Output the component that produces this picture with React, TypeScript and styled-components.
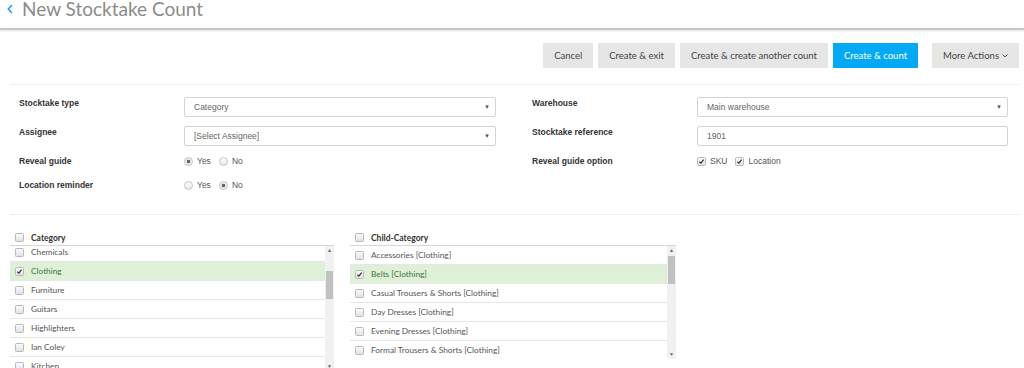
import React from 'react'
import styled, { createGlobalStyle } from 'styled-components'

const GlobalStyle = createGlobalStyle`
  html, body {
    margin: 0;
    padding: 0;
    background: #fff;
    font-family: Lato, "Liberation Sans", sans-serif;
    overflow: hidden;
  }
`

const Page = styled.div`
  width: 1024px;
  height: 368px;
  overflow: hidden;
`

const Header = styled.div`
  height: 28px;
  display: flex;
  align-items: flex-start;
  gap: 9px;
  padding-left: 7px;
  border-bottom: 2px solid #c8c8c8;
  box-shadow: 0 1px 2px rgba(0, 0, 0, 0.12);
`

const Title = styled.h1`
  margin: 0;
  font-family: Lato, sans-serif;
  font-weight: 400;
  font-size: 19px;
  line-height: 17px;
  color: #8c8c8c;
`

const Toolbar = styled.div`
  display: flex;
  justify-content: flex-end;
  gap: 5px;
  padding: 13px 5px 0 0;
`

const Button = styled.button<{ $primary?: boolean; $gap?: number }>`
  height: 25px;
  padding: 0 11px;
  border: none;
  margin-left: ${p => p.$gap ?? 0}px;
  background: ${p => (p.$primary ? '#03a9f4' : '#e6e6e6')};
  color: ${p => (p.$primary ? '#fff' : '#444')};
  font-family: Lato, sans-serif;
  font-size: 9.5px;
  display: flex;
  align-items: center;
  gap: 3px;
`

const Divider = styled.div<{ $top: number }>`
  margin: ${p => p.$top}px 5px 0 10px;
  border-top: 1px solid #eeeeee;
`

const Form = styled.div`
  display: grid;
  grid-template-columns: 513px 501px;
  padding: 12px 0 0 10px;
`

const Column = styled.div`
  display: flex;
  flex-direction: column;
`

const Row = styled.div<{ $h: number; $mt?: number }>`
  display: flex;
  align-items: center;
  height: ${p => p.$h}px;
  margin-top: ${p => p.$mt ?? 0}px;
`

const Label = styled.div<{ $top?: boolean }>`
  width: 174px;
  padding-left: 9px;
  box-sizing: border-box;
  align-self: ${p => (p.$top ? 'flex-start' : 'center')};
  margin-top: ${p => (p.$top ? 1 : 0)}px;
  font-family: "Liberation Sans", Arial, sans-serif;
  font-weight: 700;
  font-size: 8.5px;
  color: #333;
`

const Field = styled.div<{ $w: number }>`
  width: ${p => p.$w}px;
  height: 20px;
  box-sizing: border-box;
  border: 1px solid #d4d4d4;
  border-radius: 2px;
  display: flex;
  align-items: center;
  justify-content: space-between;
  padding: 0 5px 0 9px;
  font-family: "Liberation Sans", Arial, sans-serif;
  font-size: 8.5px;
  color: #666;
`

const Caret = styled.span`
  font-size: 6px;
  color: #555;
`

const Options = styled.div`
  display: flex;
  align-items: center;
  gap: 8px;
  font-family: "Liberation Sans", Arial, sans-serif;
  font-size: 8.5px;
  color: #555;
`

const Option = styled.label`
  display: flex;
  align-items: center;
  gap: 4px;
`

const Radio = styled.span<{ $on?: boolean }>`
  width: 7px;
  height: 7px;
  border-radius: 50%;
  border: 1px solid #c4c4c4;
  background: ${p => (p.$on ? 'radial-gradient(circle, #666 0 1.5px, #eee 2.1px)' : 'linear-gradient(#fff, #e8e8e8)')};
`

const Check = styled.span`
  width: 7px;
  height: 7px;
  border-radius: 1.5px;
  border: 1px solid #b9b9b9;
  background: linear-gradient(#fafafa, #e2e2e2);
  display: inline-flex;
  align-items: center;
  justify-content: center;
  flex-shrink: 0;
`

const Tick = () => (
  <svg width="7" height="7" viewBox="0 0 7 7">
    <path d="M1.4 3.7 L2.9 5.1 L5.6 1.6" stroke="#333" strokeWidth="1.2" fill="none" />
  </svg>
)

const Lists = styled.div`
  display: flex;
  gap: 16px;
  padding: 15px 0 0 10px;
`

const ListBlock = styled.div<{ $w: number }>`
  width: ${p => p.$w}px;
`

const ListHead = styled.div`
  display: flex;
  align-items: center;
  gap: 7px;
  height: 15px;
  padding: 0 0 0 5px;
  border-bottom: 1px solid #d6d6d6;
  font-size: 8.5px;
  font-weight: 700;
  color: #333;
`

const ListBody = styled.div<{ $h: number }>`
  display: flex;
  height: ${p => p.$h}px;
  overflow: hidden;
`

const Items = styled.div<{ $shift: number }>`
  flex: 1;
  margin-top: ${p => -p.$shift}px;
`

const Item = styled.div<{ $on?: boolean }>`
  display: flex;
  align-items: center;
  gap: 7px;
  height: 18px;
  padding-left: 5px;
  border-bottom: 1px solid #e6e6e6;
  background: ${p => (p.$on ? '#dff0d8' : '#fff')};
  color: ${p => (p.$on ? '#3c763d' : '#555')};
  font-size: 8.3px;
`

const Scrollbar = styled.div`
  width: 9px;
  background: #f1f1f1;
  display: flex;
  flex-direction: column;
  align-items: center;
`

const Arrow = styled.div`
  height: 9px;
  font-size: 5px;
  line-height: 9px;
  color: #666;
`

const Track = styled.div`
  flex: 1;
  width: 100%;
`

const Thumb = styled.div<{ $top: number; $h: number }>`
  margin: ${p => p.$top}px 1px 0;
  height: ${p => p.$h}px;
  background: #c1c1c1;
`

const categories = ['Chemicals', 'Clothing', 'Furniture', 'Guitars', 'Highlighters', 'Ian Coley', 'Kitchen']
const children = [
  'Accessories [Clothing]',
  'Belts [Clothing]',
  'Casual Trousers & Shorts [Clothing]',
  'Day Dresses [Clothing]',
  'Evening Dresses [Clothing]',
  'Formal Trousers & Shorts [Clothing]',
  'Jeans [Clothing]'
]

const CheckList = ({ title, items, selected, width, shift, height, thumbTop }: {
  title: string
  items: string[]
  selected: string
  width: number
  shift: number
  height: number
  thumbTop: number
}) => (
  <ListBlock $w={width}>
    <ListHead><Check />{title}</ListHead>
    <ListBody $h={height}>
      <Items $shift={shift}>
        {items.map(it => (
          <Item key={it} $on={it === selected}>
            <Check>{it === selected && <Tick />}</Check>
            {it}
          </Item>
        ))}
      </Items>
      <Scrollbar>
        <Arrow>▲</Arrow>
        <Track><Thumb $top={thumbTop} $h={28} /></Track>
        <Arrow>▼</Arrow>
      </Scrollbar>
    </ListBody>
  </ListBlock>
)

const App = () => (
  <Page>
    <GlobalStyle />
    <Header>
      <svg width="6" height="10" viewBox="0 0 6 10" style={{ marginTop: 4 }}>
        <path d="M5 1 L1.3 5 L5 9" stroke="#1e9bf0" strokeWidth="1.5" fill="none" />
      </svg>
      <Title>New Stocktake Count</Title>
    </Header>
    <Toolbar>
      <Button>Cancel</Button>
      <Button>Create &amp; exit</Button>
      <Button>Create &amp; create another count</Button>
      <Button $primary>Create &amp; count</Button>
      <Button $gap={9}>More Actions
        <svg width="6" height="4" viewBox="0 0 6 4"><path d="M0.5 0.5 L3 3 L5.5 0.5" stroke="#555" fill="none" /></svg>
      </Button>
    </Toolbar>
    <Divider $top={16} />
    <Form>
      <Column>
        <Row $h={20}>
          <Label $top>Stocktake type</Label>
          <Field $w={312}>Category<Caret>▼</Caret></Field>
        </Row>
        <Row $h={20} $mt={9}>
          <Label $top>Assignee</Label>
          <Field $w={312}>[Select Assignee]<Caret>▼</Caret></Field>
        </Row>
        <Row $h={16} $mt={7}>
          <Label>Reveal guide</Label>
          <Options>
            <Option><Radio $on />Yes</Option>
            <Option><Radio />No</Option>
          </Options>
        </Row>
        <Row $h={16} $mt={8}>
          <Label>Location reminder</Label>
          <Options>
            <Option><Radio />Yes</Option>
            <Option><Radio $on />No</Option>
          </Options>
        </Row>
      </Column>
      <Column>
        <Row $h={20}>
          <Label $top>Warehouse</Label>
          <Field $w={311}>Main warehouse<Caret>▼</Caret></Field>
        </Row>
        <Row $h={20} $mt={9}>
          <Label $top>Stocktake reference</Label>
          <Field $w={311}>1901</Field>
        </Row>
        <Row $h={16} $mt={7}>
          <Label>Reveal guide option</Label>
          <Options>
            <Option><Check><Tick /></Check>SKU</Option>
            <Option><Check><Tick /></Check>Location</Option>
          </Options>
        </Row>
      </Column>
    </Form>
    <Divider $top={21} />
    <Lists>
      <CheckList title="Category" items={categories} selected="Clothing" width={324} shift={3} height={125} thumbTop={16} />
      <CheckList title="Child-Category" items={children} selected="Belts [Clothing]" width={326} shift={0} height={113} thumbTop={1} />
    </Lists>
  </Page>
)

export default App
